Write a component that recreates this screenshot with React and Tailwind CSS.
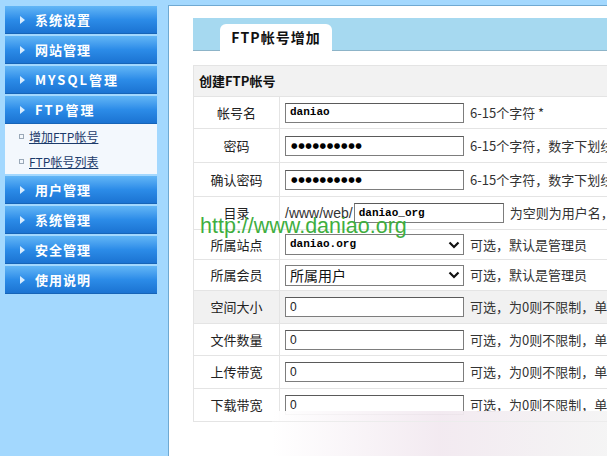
import React from "react";

const cn = '"Noto Sans CJK SC", "Liberation Sans", sans-serif';

function Arrow() {
  return (
    <svg width="5" height="8" viewBox="0 0 5 8" className="shrink-0">
      <path d="M0 0 L5 4 L0 8 Z" fill="#d6ecff" />
    </svg>
  );
}

function MenuBtn({ label, wide }) {
  return (
    <div className="h-[28px] flex items-center pl-[15px] gap-[10px] bg-gradient-to-b from-[#62b6f6] via-[#2c8ce8] to-[#1b73d2] border-b border-[#1664b8]">
      <Arrow />
      <span
        className={`text-white font-bold text-[13px] ${wide ? "tracking-[2px]" : "tracking-[1px]"}`}
        style={{ fontFamily: cn }}
      >
        {label}
      </span>
    </div>
  );
}

function SubItem({ label }) {
  return (
    <div className="h-[25px] flex items-center pl-[14px] gap-[5px]">
      <span className="w-[5px] h-[5px] border border-[#9aa9b8] shrink-0" />
      <span className="text-[12px] text-[#1b3b6b] underline" style={{ fontFamily: cn }}>
        {label}
      </span>
    </div>
  );
}

function Input({ w = "w-[179px]", children }) {
  return (
    <div
      className={`${w} h-[20px] border border-[#7d7d7d] border-t-[#5a5a5a] bg-white flex items-center pl-[4px] shrink-0 overflow-hidden`}
    >
      {children}
    </div>
  );
}

function MonoText({ children }) {
  return (
    <span
      className="text-[11px] font-bold text-black"
      style={{ fontFamily: '"Liberation Mono", "DejaVu Sans Mono", monospace' }}
    >
      {children}
    </span>
  );
}

function Dots() {
  return (
    <span
      className="text-[7.5px] text-black tracking-[0.6px] pl-[1px]"
      style={{ fontFamily: '"DejaVu Sans", sans-serif' }}
    >
      ●●●●●●●●●●
    </span>
  );
}

function Zero() {
  return (
    <span className="text-[12px] text-[#222]" style={{ fontFamily: '"Liberation Sans", sans-serif' }}>
      0
    </span>
  );
}

function Select({ children }) {
  return (
    <div className="w-[179px] h-[21px] border border-[#7d7d7d] bg-white flex items-center justify-between pl-[4px] pr-[3px] shrink-0">
      {children}
      <svg width="12" height="8" viewBox="0 0 12 8">
        <path d="M1.5 1.5 L6 6 L10.5 1.5" fill="none" stroke="#111" strokeWidth="2.2" />
      </svg>
    </div>
  );
}

function Hint({ children }) {
  return (
    <span className="text-[13px] text-[#333] whitespace-nowrap" style={{ fontFamily: cn }}>
      {children}
    </span>
  );
}

function Row({ label, h, gray, children }) {
  return (
    <div
      className={`flex border-b border-[#e4e4e4] ${gray ? "bg-[#f1f1f1]" : "bg-white"}`}
      style={{ height: h }}
    >
      <div
        className="w-[86px] shrink-0 border-r border-[#e4e4e4] flex items-center justify-center text-[13px] text-[#222]"
        style={{ fontFamily: cn }}
      >
        {label}
      </div>
      <div className="flex items-center pl-[5px] gap-[6px] overflow-hidden whitespace-nowrap">{children}</div>
    </div>
  );
}

export default function App() {
  return (
    <div className="w-[607px] h-[456px] overflow-hidden bg-[#a3d8fe] flex relative">
      {/* Sidebar */}
      <div className="w-[168px] shrink-0 pt-[6px] pl-[5px] pr-[11px] flex flex-col gap-[2px]">
        <MenuBtn label="系统设置" />
        <MenuBtn label="网站管理" />
        <MenuBtn label="MYSQL管理" wide />
        <div className="flex flex-col">
          <MenuBtn label="FTP管理" wide />
          <div className="bg-[#f3f8fd]">
            <SubItem label="增加FTP帐号" />
            <SubItem label="FTP帐号列表" />
          </div>
        </div>
        <MenuBtn label="用户管理" />
        <MenuBtn label="系统管理" />
        <MenuBtn label="安全管理" />
        <MenuBtn label="使用说明" />
      </div>

      {/* Main */}
      <div className="flex-1 mt-[5px] border-t border-l border-[#6fa9d2] bg-white pl-[24px] pt-[12px] flex flex-col">
        <div className="h-[33px] bg-[#a6d9f0] border-b border-[#8db4c8] pl-[27px] pt-[6px] flex">
          <div
            className="w-[112px] h-[27px] bg-white rounded-t-[6px] flex items-center justify-center text-[14px] font-bold text-[#111] tracking-[1px]"
            style={{ fontFamily: cn }}
          >
            FTP帐号增加
          </div>
        </div>
        <div className="h-[14px]" />
        <div className="border-l border-[#e4e4e4] flex flex-col">
          <div
            className="h-[32px] bg-[#f2f2f2] border-y border-[#e4e4e4] flex items-center pl-[5px] text-[13px] font-bold text-[#111]"
            style={{ fontFamily: cn }}
          >
            创建FTP帐号
          </div>
          <Row label="帐号名" h={32}>
            <Input>
              <MonoText>daniao</MonoText>
            </Input>
            <Hint>6-15个字符 *</Hint>
          </Row>
          <Row label="密码" h={34}>
            <Input>
              <Dots />
            </Input>
            <Hint>6-15个字符，数字下划线</Hint>
          </Row>
          <Row label="确认密码" h={34}>
            <Input>
              <Dots />
            </Input>
            <Hint>6-15个字符，数字下划线</Hint>
          </Row>
          <Row label="目录" h={33}>
            <div className="flex items-center">
              <span
                className="text-[14px] text-[#333] pr-[1px]"
                style={{ fontFamily: '"Liberation Sans", sans-serif' }}
              >
                /www/web/
              </span>
              <Input w="w-[150px]">
                <MonoText>daniao_org</MonoText>
              </Input>
            </div>
            <Hint>为空则为用户名，</Hint>
          </Row>
          <Row label="所属站点" h={30}>
            <Select>
              <MonoText>daniao.org</MonoText>
            </Select>
            <Hint>可选，默认是管理员</Hint>
          </Row>
          <Row label="所属会员" h={31}>
            <Select>
              <span className="text-[14px] text-[#111]" style={{ fontFamily: cn }}>
                所属用户
              </span>
            </Select>
            <Hint>可选，默认是管理员</Hint>
          </Row>
          <Row label="空间大小" h={33} gray>
            <Input>
              <Zero />
            </Input>
            <Hint>可选，为0则不限制，单位</Hint>
          </Row>
          <Row label="文件数量" h={32}>
            <Input>
              <Zero />
            </Input>
            <Hint>可选，为0则不限制，单位</Hint>
          </Row>
          <Row label="上传带宽" h={33}>
            <Input>
              <Zero />
            </Input>
            <Hint>可选，为0则不限制，单位</Hint>
          </Row>
          <Row label="下载带宽" h={33}>
            <Input>
              <Zero />
            </Input>
            <Hint>可选，为0则不限制，单位</Hint>
          </Row>
        </div>
      </div>

      {/* faded bottom overlay */}
      <div className="absolute left-[272px] right-0 top-[411px] bottom-0 bg-gradient-to-r from-[#ffffff] via-[#f2e9f0] to-[#f4f4f4] opacity-95" />
      <div className="absolute left-[272px] right-0 top-[421px] h-px bg-[#ececec]" />

      {/* watermark */}
      <div
        className="absolute left-[200px] top-[216px] text-[21.5px] text-[#3fae3f] leading-none pointer-events-none"
        style={{ fontFamily: '"Liberation Sans", Arial, sans-serif' }}
      >
        http://www.daniao.org
      </div>
    </div>
  );
}
